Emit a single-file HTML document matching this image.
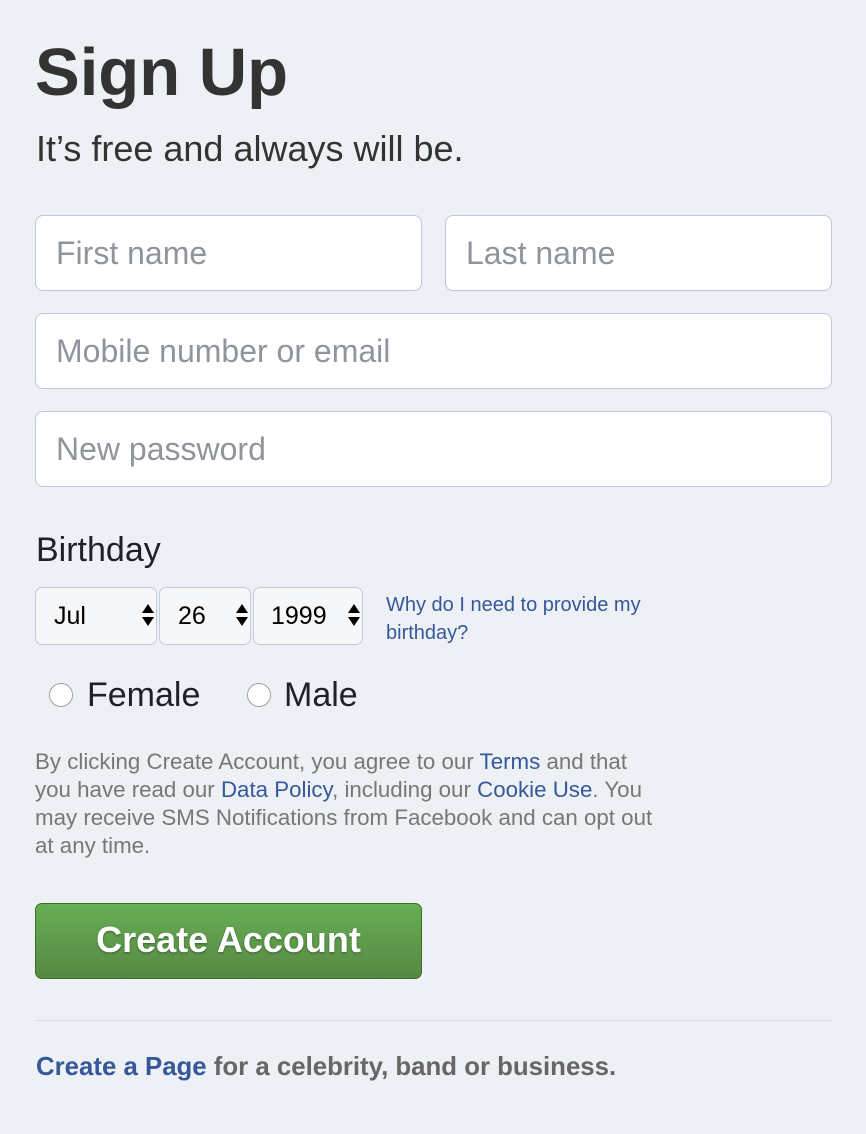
<!DOCTYPE html>
<html><head><meta charset="utf-8"><style>
body{margin:0;background:#edf0f5;width:866px;height:1134px;position:relative;font-family:"Liberation Sans",sans-serif;overflow:hidden}
.a{position:absolute}
.in{position:absolute;background:#fff;border:1px solid #bdc7d8;border-radius:8px;box-sizing:border-box;color:#90949c;font-size:32px;padding-left:20px;line-height:74px;height:76px}
.sel{position:absolute;top:587px;height:58px;background:#f6f7f9;border:1px solid #c3cad9;border-radius:7px;box-sizing:border-box;font-size:25px;color:#000;line-height:56px}
.arr{position:absolute;right:8px;top:16px;width:0}
.arr:before{content:"";position:absolute;border:6px solid transparent;border-bottom:9px solid #000;border-top:0;left:-6px;top:0}
.arr:after{content:"";position:absolute;border:6px solid transparent;border-top:9px solid #000;border-bottom:0;left:-6px;top:13px}
.rad{position:absolute;width:24px;height:24px;border-radius:50%;background:#fff;border:1px solid #a0a0a0;box-sizing:border-box;top:683px}
a{color:#365899;text-decoration:none}
</style></head><body>
<div class="a" style="left:35px;top:34px;font-size:67px;font-weight:bold;color:#333;letter-spacing:0px">Sign Up</div>
<div class="a" style="left:36px;top:128px;font-size:36px;color:#333">It’s free and always will be.</div>
<div class="in" style="left:35px;top:215px;width:387px">First name</div>
<div class="in" style="left:445px;top:215px;width:387px">Last name</div>
<div class="in" style="left:35px;top:313px;width:797px">Mobile number or email</div>
<div class="in" style="left:35px;top:411px;width:797px">New password</div>
<div class="a" style="left:36px;top:531px;font-size:34px;color:#1d2129">Birthday</div>
<div class="sel" style="left:35px;width:122px;padding-left:18px">Jul<span class="arr"></span></div>
<div class="sel" style="left:159px;width:92px;padding-left:18px">26<span class="arr"></span></div>
<div class="sel" style="left:253px;width:110px;padding-left:17px">1999<span class="arr"></span></div>
<div class="a" style="left:386px;top:591px;font-size:20px;line-height:28px;color:#365899">Why do I need to provide my<br>birthday?</div>
<div class="rad" style="left:49px"></div>
<div class="a" style="left:87px;top:676px;font-size:34px;color:#1d2129">Female</div>
<div class="rad" style="left:247px"></div>
<div class="a" style="left:284px;top:676px;font-size:34px;color:#1d2129">Male</div>
<div class="a" style="left:35px;top:748px;white-space:nowrap;font-size:22.3px;line-height:28px;color:#777">By clicking Create Account, you agree to our <a>Terms</a> and that<br>you have read our <a>Data Policy</a>, including our <a>Cookie Use</a>. You<br>may receive SMS Notifications from Facebook and can opt out<br>at any time.</div>
<div class="a" style="left:35px;top:903px;width:387px;height:76px;box-sizing:border-box;border:1px solid #3b6e22;border-radius:7px;background:linear-gradient(#67ae55,#578843);color:#fff;font-size:36px;font-weight:bold;text-align:center;line-height:72px;text-shadow:0 1px 2px rgba(0,0,0,.4)">Create Account</div>
<div class="a" style="left:35px;top:1020px;width:797px;height:1px;background:#dadde1"></div>
<div class="a" style="left:36px;top:1053px;font-size:25.8px;font-weight:bold;color:#666"><a>Create a Page</a> for a celebrity, band or business.</div>
</body></html>
